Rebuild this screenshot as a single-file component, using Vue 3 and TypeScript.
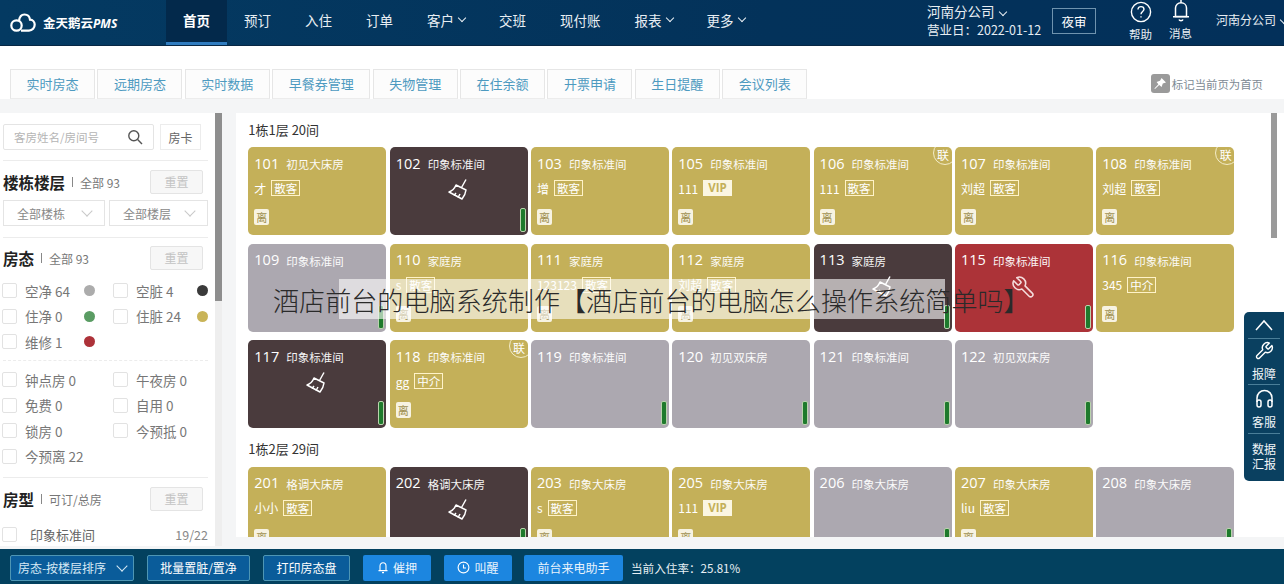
<script setup lang="ts">
type Room = {
  no: string
  name: string
  state: 'gold' | 'dark' | 'gray' | 'red'
  guest?: string
  tag?: string
  link?: boolean
}

const navs = [
  { label: '首页', active: true },
  { label: '预订' },
  { label: '入住' },
  { label: '订单' },
  { label: '客户', arrow: true },
  { label: '交班' },
  { label: '现付账' },
  { label: '报表', arrow: true },
  { label: '更多', arrow: true },
]
const tabs = ['实时房态', '远期房态', '实时数据', '早餐券管理', '失物管理', '在住余额', '开票申请', '生日提醒', '会议列表']

const stateRows = [
  [{ t: '空净 64', c: 'd-gray' }, { t: '空脏 4', c: 'd-dark' }],
  [{ t: '住净 0', c: 'd-green' }, { t: '住脏 24', c: 'd-gold' }],
  [{ t: '维修 1', c: 'd-red' }],
]
const extraRows = [
  ['钟点房 0', '午夜房 0'],
  ['免费 0', '自用 0'],
  ['锁房 0', '今预抵 0'],
  ['今预离 22'],
]

const std = '印象标准间'
const bed = '印象大床房'
const floors: { title: string; rooms: Room[] }[] = [
  {
    title: '1栋1层 20间',
    rooms: [
      { no: '101', name: '初见大床房', state: 'gold', guest: '才', tag: '散客' },
      { no: '102', name: std, state: 'dark' },
      { no: '103', name: std, state: 'gold', guest: '增', tag: '散客' },
      { no: '105', name: std, state: 'gold', guest: '111', tag: 'VIP' },
      { no: '106', name: std, state: 'gold', guest: '111', tag: '散客', link: true },
      { no: '107', name: std, state: 'gold', guest: '刘超', tag: '散客' },
      { no: '108', name: std, state: 'gold', guest: '刘超', tag: '散客', link: true },
      { no: '109', name: std, state: 'gray' },
      { no: '110', name: '家庭房', state: 'gold', guest: 's', tag: '散客' },
      { no: '111', name: '家庭房', state: 'gold', guest: '123123', tag: '散客' },
      { no: '112', name: '家庭房', state: 'gold', guest: '刘超', tag: '散客' },
      { no: '113', name: '家庭房', state: 'dark' },
      { no: '115', name: std, state: 'red' },
      { no: '116', name: std, state: 'gold', guest: '345', tag: '中介' },
      { no: '117', name: std, state: 'dark' },
      { no: '118', name: std, state: 'gold', guest: 'gg', tag: '中介', link: true },
      { no: '119', name: std, state: 'gray' },
      { no: '120', name: '初见双床房', state: 'gray' },
      { no: '121', name: std, state: 'gray' },
      { no: '122', name: '初见双床房', state: 'gray' },
    ],
  },
  {
    title: '1栋2层 29间',
    rooms: [
      { no: '201', name: '格调大床房', state: 'gold', guest: '小小', tag: '散客' },
      { no: '202', name: '格调大床房', state: 'dark' },
      { no: '203', name: bed, state: 'gold', guest: 's', tag: '散客' },
      { no: '205', name: bed, state: 'gold', guest: '111', tag: 'VIP' },
      { no: '206', name: bed, state: 'gray' },
      { no: '207', name: bed, state: 'gold', guest: 'liu', tag: '散客' },
      { no: '208', name: bed, state: 'gray' },
    ],
  },
]
</script>

<template>
  <div class="page">
    <header class="top">
      <div class="logo">
        <svg width="26" height="20" viewBox="0 0 26 20" fill="none" stroke="#fff" stroke-width="2.2">
          <circle cx="6.5" cy="12.5" r="5.2" />
          <path d="M9 8 C9.5 3.5 12 1.5 14.5 1.5 C17.5 1.5 19.6 3.6 20 6.6 C22.8 6.8 24.7 9 24.7 11.6 C24.7 14.8 22.4 17.6 19 17.6 H11" />
        </svg>
        <span class="logo-text">金天鹅云<i>PMS</i></span>
      </div>
      <nav class="nav">
        <a v-for="n in navs" :key="n.label" class="nav-item" :class="{ active: n.active }">
          {{ n.label }}<span v-if="n.arrow" class="chev"></span>
        </a>
      </nav>
      <div class="top-right">
        <div class="shop">
          <div class="shop-name">河南分公司<span class="chev"></span></div>
          <div class="shop-date">营业日：2022-01-12</div>
        </div>
        <button class="audit">夜审</button>
        <div class="top-icon help">
          <svg width="22" height="22" viewBox="0 0 22 22" fill="none" stroke="#fff" stroke-width="1.4">
            <circle cx="11" cy="11" r="9.6" />
            <path d="M8 8.6 C8 6.6 9.4 5.6 11 5.6 C12.8 5.6 14 6.8 14 8.3 C14 10.4 11 10.6 11 13.2" />
            <path d="M11 15.2 V16.6" />
          </svg>
          <span>帮助</span>
        </div>
        <div class="top-icon bell">
          <svg width="20" height="23" viewBox="0 0 20 23" fill="none" stroke="#fff" stroke-width="1.5">
            <path d="M4.5 16.5 V8 C4.5 4.8 7 2.8 10 2.8 C13 2.8 15.5 4.8 15.5 8 V16.5 Z" />
            <path d="M2 16.8 H18 M10 0 V2.8 M8 19.5 C8.6 21 11.4 21 12 19.5" />
          </svg>
          <span>消息</span>
        </div>
        <div class="user">河南分公司<span class="chev"></span></div>
      </div>
    </header>

    <div class="tabbar">
      <a v-for="t in tabs" :key="t" class="tab">{{ t }}</a>
      <div class="mark">
        <span class="mark-icon">
          <svg width="14" height="14" viewBox="0 0 14 14"><path fill="#fff" d="M8.6 1 L13 5.4 L9.8 6.6 L8.6 10 L6.2 8 L2 12 L1.4 11.4 L5.4 7.2 L3.6 5 L7 3.8 Z" /></svg>
        </span>
        标记当前页为首页
      </div>
    </div>

    <div class="body">
      <aside class="side">
        <div class="side-in">
          <div class="search-row">
            <div class="search">
              <span>客房姓名/房间号</span>
              <svg width="16" height="16" viewBox="0 0 16 16" fill="none" stroke="#555" stroke-width="1.4">
                <circle cx="6.8" cy="6.8" r="5" /><path d="M10.6 10.6 L15 15" />
              </svg>
            </div>
            <div class="card-btn">房卡</div>
          </div>

          <div class="sec floors-sec">
            <div class="sec-head">
              <b>楼栋楼层</b><i></i><span>全部 93</span><em class="reset">重置</em>
            </div>
            <div class="selects">
              <div class="select first">全部楼栋<span class="chev"></span></div>
              <div class="select">全部楼层<span class="chev"></span></div>
            </div>
          </div>

          <div class="sec state-sec">
            <div class="sec-head">
              <b>房态</b><i></i><span>全部 93</span><em class="reset">重置</em>
            </div>
            <div v-for="(r, i) in stateRows" :key="i" class="check-row">
              <div v-for="c in r" :key="c.t" class="check">
                <u></u><label>{{ c.t }}</label><s class="dot" :class="c.c"></s>
              </div>
            </div>
          </div>

          <div class="sec extra-sec">
            <div v-for="(r, i) in extraRows" :key="i" class="check-row">
              <div v-for="c in r" :key="c" class="check">
                <u></u><label>{{ c }}</label>
              </div>
            </div>
          </div>

          <div class="sec type-sec">
            <div class="sec-head">
              <b>房型</b><i></i><span>可订/总房</span><em class="reset">重置</em>
            </div>
            <div class="type-row"><u></u><label>印象标准间</label><span>19/22</span></div>
          </div>
        </div>
        <div class="side-bar"><div class="side-thumb"></div></div>
      </aside>

      <main class="main">
        <section v-for="f in floors" :key="f.title" class="floor">
          <h3>{{ f.title }}</h3>
          <div class="grid">
            <div v-for="r in f.rooms" :key="r.no" class="room" :class="r.state">
              <div class="room-head"><b>{{ r.no }}</b><span>{{ r.name }}</span></div>
              <div v-if="r.guest" class="guest">
                <span>{{ r.guest }}</span><em :class="{ vip: r.tag === 'VIP' }">{{ r.tag }}</em>
              </div>
              <div v-else class="mid">
                <svg v-if="r.state === 'dark'" width="24" height="24" viewBox="0 0 24 24" fill="none" stroke="#fff" stroke-width="1.5" stroke-linejoin="round">
                  <path d="M14.5 9.5 L19 1.5" />
                  <path d="M9 7 L19 12 C18.6 15.5 17 18.5 15 21 L2 14 C5 13 7.6 10.5 9 7 Z" />
                  <path d="M7 17.5 L9 15 M11 19.5 L13 16" />
                </svg>
                <svg v-else-if="r.state === 'red'" class="flip" width="25" height="25" viewBox="0 0 24 24" fill="none" stroke="#f4dcdc" stroke-width="1.5" stroke-linejoin="round">
                  <path d="M14.7 6.3a1 1 0 0 0 0 1.4l1.6 1.6a1 1 0 0 0 1.4 0l3.77-3.77a6 6 0 0 1-7.94 7.94l-6.91 6.91a2.12 2.12 0 0 1-3-3l6.91-6.91a6 6 0 0 1 7.94-7.94l-3.76 3.76z" />
                </svg>
              </div>
              <span v-if="r.guest" class="leave">离</span>
              <span v-if="r.state !== 'gold'" class="power"></span>
              <span v-if="r.link" class="link">联</span>
            </div>
          </div>
        </section>
      </main>

      <div class="main-bar"><div class="main-thumb"></div></div>
    </div>

    <footer class="foot">
      <button class="fbtn outline sort">房态-按楼层排序<span class="chev"></span></button>
      <button class="fbtn outline batch">批量置脏/置净</button>
      <button class="fbtn outline print">打印房态盘</button>
      <button class="fbtn solid short">
        <svg width="12" height="13" viewBox="0 0 12 13" fill="none" stroke="#fff" stroke-width="1.1"><path d="M3 9.5 V5 C3 3 4.4 1.8 6 1.8 C7.6 1.8 9 3 9 5 V9.5 Z M1.5 9.6 H10.5 M5 11.6 H7" /></svg>
        催押
      </button>
      <button class="fbtn solid short">
        <svg width="13" height="13" viewBox="0 0 13 13" fill="none" stroke="#fff" stroke-width="1.1"><circle cx="6.5" cy="6.5" r="5.4" /><path d="M6.5 3.4 V7 H9" /></svg>
        叫醒
      </button>
      <button class="fbtn solid phone">前台来电助手</button>
      <span class="rate">当前入住率：25.81%</span>
    </footer>

    <aside class="float">
      <div class="float-item up">
        <svg width="20" height="12" viewBox="0 0 20 12" fill="none" stroke="#fff" stroke-width="1.5"><path d="M2 11 L10 2 L18 11" /></svg>
      </div>
      <div class="float-item repair">
        <svg width="20" height="20" viewBox="0 0 24 24" fill="none" stroke="#fff" stroke-width="1.7" stroke-linejoin="round">
          <path d="M14.7 6.3a1 1 0 0 0 0 1.4l1.6 1.6a1 1 0 0 0 1.4 0l3.77-3.77a6 6 0 0 1-7.94 7.94l-6.91 6.91a2.12 2.12 0 0 1-3-3l6.91-6.91a6 6 0 0 1 7.94-7.94l-3.76 3.76z" />
        </svg>
        <span>报障</span>
      </div>
      <div class="float-item service">
        <svg width="19" height="20" viewBox="0 0 19 20" fill="none" stroke="#fff" stroke-width="1.5">
          <path d="M2 13 V9 C2 4.6 5.4 1.5 9.5 1.5 C13.6 1.5 17 4.6 17 9 V13" />
          <rect x="2" y="11" width="4" height="7" rx="2" /><rect x="13" y="11" width="4" height="7" rx="2" />
        </svg>
        <span>客服</span>
      </div>
      <div class="float-item report"><span>数据</span><span>汇报</span></div>
    </aside>

    <div class="caption">
      <div class="caption-band"></div>
      <p>酒店前台的电脑系统制作【酒店前台的电脑怎么操作系统简单吗】</p>
    </div>
  </div>
</template>

<style scoped>
.page {
  position: relative;
  width: 1284px;
  height: 584px;
  overflow: hidden;
  display: flex;
  flex-direction: column;
  background: #f4f5f6;
  color: #555;
  font-family: "Noto Sans CJK SC", "Noto Sans", sans-serif;
  font-size: 12px;
}
.chev {
  display: inline-block;
  width: 5px;
  height: 5px;
  margin-left: 5px;
  border-right: 1px solid currentColor;
  border-bottom: 1px solid currentColor;
  transform: translateY(-2px) rotate(45deg);
}

/* header */
.top {
  flex: none;
  height: 46px;
  display: flex;
  align-items: stretch;
  background: linear-gradient(90deg, #043a62, #03325a 60%, #03305a);
  color: #e8eef3;
  border-bottom: 1px solid #082744;
  box-sizing: border-box;
}
.logo {
  width: 166px;
  flex: none;
  display: flex;
  align-items: center;
  padding-left: 10px;
  box-sizing: border-box;
  gap: 7px;
}
.logo-text {
  font-size: 12.5px;
  font-weight: 700;
  color: #fff;
  white-space: nowrap;
}
.logo-text i {
  font-family: "Open Sans", sans-serif;
  font-size: 12px;
}
.nav {
  display: flex;
}
.nav-item {
  display: flex;
  align-items: center;
  padding: 0 17px 2px;
  font-size: 13.5px;
  white-space: nowrap;
  border-bottom: 3px solid transparent;
}
.nav-item.active {
  background: #03294b;
  border-bottom-color: #2f7cc0;
  color: #fff;
  font-weight: 700;
}
.top-right {
  display: flex;
  margin-left: auto;
  align-items: flex-start;
}
.shop {
  width: 125px;
  padding-top: 2px;
}
.shop-name {
  font-size: 13.5px;
  line-height: 18px;
}
.shop-date {
  margin-top: 1px;
  font-size: 12.5px;
  line-height: 18px;
  white-space: nowrap;
}
.audit {
  width: 44px;
  height: 26px;
  margin-top: 8px;
  padding: 0;
  background: transparent;
  border: 1px solid #6f93ae;
  color: #fff;
  font: inherit;
  font-size: 12.5px;
}
.top-icon {
  display: flex;
  flex-direction: column;
  align-items: center;
  font-size: 11.5px;
  line-height: 14px;
}
.top-icon span {
  margin-top: 3px;
}
.top-icon.help {
  margin-left: 33px;
  padding-top: 1px;
}
.top-icon.help span {
  margin-top: 4px;
}
.top-icon.bell {
  margin-left: 17px;
}
.user {
  margin-left: 24px;
  padding-top: 12px;
  width: 68px;
  font-size: 12px;
  line-height: 16px;
  white-space: nowrap;
}

/* tab strip */
.tabbar {
  flex: none;
  height: 53px;
  background: #fff;
  display: flex;
  align-items: flex-end;
  padding-left: 10px;
  gap: 2.4px;
  box-sizing: border-box;
}
.tab {
  height: 30px;
  padding: 0 15.5px;
  line-height: 28px;
  box-sizing: border-box;
  border: 1px solid #e6e6e6;
  border-bottom-color: #ececec;
  background: #fcfcfc;
  color: #4d9ac0;
  font-size: 13px;
  white-space: nowrap;
}
.mark {
  position: absolute;
  right: 21px;
  top: 74px;
  display: flex;
  align-items: center;
  gap: 2px;
  font-size: 11.4px;
  color: #7d8a94;
}
.mark-icon {
  width: 19px;
  height: 19px;
  border-radius: 3px;
  background: #9a9a9a;
  display: flex;
  align-items: center;
  justify-content: center;
}

/* body */
.body {
  flex: 1;
  min-height: 0;
  display: flex;
  padding-top: 14px;
}
.side {
  width: 222px;
  flex: none;
  height: 433px;
  display: flex;
  background: #fff;
  overflow: hidden;
}
.side-in {
  width: 215px;
  flex: none;
  padding: 11px 7px 0 3px;
  box-sizing: border-box;
}
.side-bar {
  width: 7px;
  background: #eeeeee;
}
.side-thumb {
  height: 188px;
  background: #8e8e8e;
}
.search-row {
  display: flex;
  gap: 6px;
}
.search {
  width: 151px;
  height: 26px;
  box-sizing: border-box;
  border: 1px solid #e4e4e4;
  border-radius: 2px;
  display: flex;
  align-items: center;
  justify-content: space-between;
  padding: 0 10px;
  color: #b5b5b5;
  font-size: 11.5px;
}
.card-btn {
  width: 41px;
  height: 26px;
  line-height: 25px;
  text-align: center;
  box-sizing: border-box;
  border: 1px solid #ececec;
  color: #666;
}
.sec {
  border-top: 1px solid #ececec;
}
.floors-sec {
  margin-top: 10px;
  padding-top: 9px;
  height: 77px;
  box-sizing: border-box;
}
.sec-head {
  display: flex;
  align-items: center;
  height: 24px;
  position: relative;
}
.sec-head b {
  font-size: 15.5px;
  color: #222;
  line-height: 24px;
}
.sec-head i {
  width: 1px;
  height: 10px;
  margin: 0 7px;
  background: #888;
}
.sec-head span {
  color: #777;
  font-size: 12px;
}
.reset {
  margin-left: auto;
  margin-right: 5px;
  width: 53px;
  height: 24px;
  line-height: 22px;
  box-sizing: border-box;
  text-align: center;
  font-style: normal;
  color: #c4c4c4;
  background: #f7f7f7;
  border: 1px solid #e4e4e4;
  border-radius: 2px;
}
.selects {
  display: flex;
  gap: 4px;
  margin-top: 6px;
}
.select {
  flex: 1;
  height: 26px;
  box-sizing: border-box;
  border: 1px solid #e4e4e4;
  display: flex;
  align-items: center;
  justify-content: space-between;
  padding: 0 13px;
  color: #888;
  font-size: 12px;
}
.select.first {
  flex: none;
  width: 102px;
}
.select .chev {
  width: 7px;
  height: 7px;
  color: #c8c8c8;
}
.state-sec {
  padding-top: 8px;
  height: 123px;
  box-sizing: border-box;
}
.check-row {
  display: flex;
  height: 25.5px;
  align-items: center;
}
.state-sec .sec-head {
  margin-bottom: 8px;
}
.check {
  width: 111px;
  display: flex;
  align-items: center;
  position: relative;
  flex: none;
}
u {
  display: block;
  width: 15px;
  height: 15px;
  flex: none;
  box-sizing: border-box;
  margin-left: -1px;
  border: 1px solid #e2e2e2;
  border-radius: 2px;
  text-decoration: none;
}
.check label {
  margin-left: 8px;
  font-size: 13.5px;
  color: #777;
  white-space: nowrap;
}
.dot {
  position: absolute;
  left: 81px;
  width: 11px;
  height: 11px;
  border-radius: 50%;
  text-decoration: none;
}
.check + .check .dot {
  left: 83px;
}
.d-gray { background: #acacac; }
.d-dark { background: #3a3a3a; }
.d-green { background: #5a9c63; }
.d-gold { background: #c9b458; }
.d-red { background: #ad3239; }
.extra-sec {
  padding-top: 6px;
  height: 117px;
  box-sizing: border-box;
  border-top-style: dashed;
}
.type-sec {
  padding-top: 9px;
}
.type-row {
  display: flex;
  align-items: center;
  margin-top: 11px;
  height: 24px;
}
.type-row label {
  margin-left: 13px;
  font-size: 13px;
  color: #666;
}
.type-row span {
  margin-left: auto;
  color: #888;
  font-size: 12.5px;
}

/* room grid */
.main {
  width: 1034px;
  height: 424px;
  margin-left: 14px;
  padding: 7px 0 0 12.3px;
  box-sizing: border-box;
  flex: none;
  background: #fff;
  overflow: hidden;
}
.floor + .floor {
  margin-top: 10.5px;
}
.floor h3 {
  margin: 0 0 7px;
  height: 20px;
  line-height: 20px;
  font-size: 13px;
  font-weight: 400;
  color: #333;
}
.floor + .floor h3 {
  margin-bottom: 8px;
}
.grid {
  display: grid;
  grid-template-columns: repeat(7, 138px);
  column-gap: 3.33px;
  row-gap: 8.7px;
}
.room {
  position: relative;
  height: 88px;
  border-radius: 5px;
  overflow: hidden;
  padding: 6px 6px 0;
  box-sizing: border-box;
  color: #fff;
}
.gold { background: #c4b059; }
.dark { background: #4a3b3d; }
.gray { background: #aca8b0; }
.red { background: #ac3338; }
.room-head {
  display: flex;
  align-items: center;
  height: 20px;
}
.room-head b {
  font-family: "Open Sans", sans-serif;
  font-weight: 400;
  font-size: 14.5px;
  margin-right: 9px;
  width: 23px;
}
.room-head span {
  margin-top: 2px;
  font-size: 11.5px;
  white-space: nowrap;
  opacity: 0.95;
}
.guest {
  display: flex;
  align-items: center;
  gap: 5px;
  height: 16px;
  margin-top: 7px;
  font-size: 12px;
  white-space: nowrap;
}
.guest em {
  font-style: normal;
  font-size: 11.5px;
  line-height: 14px;
  padding: 0 2px;
  border: 1px solid #fff3c8;
}
.guest em.vip {
  background: #fbf6e2;
  color: #c4b059;
  font-family: "Open Sans", sans-serif;
  font-weight: 700;
  padding: 0 4px;
  border-color: #fbf6e2;
}
.mid {
  display: flex;
  justify-content: center;
  height: 24px;
  margin-top: 5px;
}
.flip {
  transform: scaleX(-1);
}
.leave {
  position: absolute;
  left: 6px;
  top: 62px;
  width: 15px;
  height: 16px;
  line-height: 16px;
  text-align: center;
  font-size: 11px;
  border-radius: 2px;
  background: #f7f3e2;
  color: #a09050;
}
.power {
  position: absolute;
  right: 2px;
  bottom: 3px;
  width: 6px;
  height: 24px;
  box-sizing: border-box;
  border: 1px solid #b9d3ad;
  border-radius: 2px;
  background: #1e7a2c;
}
.link {
  position: absolute;
  right: -5px;
  top: -6px;
  width: 24px;
  height: 24px;
  box-sizing: border-box;
  line-height: 26px;
  text-indent: -3px;
  text-align: center;
  border: 1px solid #f3ecc8;
  border-radius: 50%;
  font-size: 12px;
}
.main-bar {
  flex: none;
  width: 14px;
  height: 424px;
  background: #fff;
}
.main-thumb {
  width: 6px;
  height: 125px;
  margin-left: 1px;
  background: #9a9a9a;
}

/* footer */
.foot {
  flex: none;
  height: 35px;
  background: #03415f;
  display: flex;
  align-items: center;
  padding: 2px 0 0 10px;
  box-sizing: border-box;
  gap: 13px;
}
.fbtn {
  height: 26px;
  padding: 0;
  border-radius: 2px;
  font: inherit;
  font-size: 12px;
  color: #fff;
  display: flex;
  align-items: center;
  justify-content: center;
  gap: 4px;
  white-space: nowrap;
}
.outline {
  background: #0a5c9a;
  border: 1px solid #4e96b4;
  box-sizing: border-box;
}
.solid {
  background: #1c86e0;
  border: 0;
  color: #e8f3fc;
}
.sort { width: 124px; color: #d7e9f5; }
.sort .chev { width: 7px; height: 7px; margin-left: 8px; }
.batch { width: 103px; }
.print { width: 87px; }
.short { width: 68px; }
.phone { width: 99px; margin-left: -1px; }
.rate {
  margin-left: -5px;
  color: #e8f0f4;
  font-size: 11.6px;
  white-space: nowrap;
}

/* floating shortcuts */
.float {
  position: absolute;
  right: 0;
  top: 312px;
  width: 40px;
  height: 169px;
  background: #0a4060;
  border-radius: 5px 0 0 5px;
  color: #f0f5f8;
  font-size: 12px;
  line-height: 15px;
  display: flex;
  flex-direction: column;
  align-items: center;
}
.float-item {
  width: 32px;
  display: flex;
  flex-direction: column;
  align-items: center;
  border-bottom: 1px solid #4a7e98;
  box-sizing: border-box;
}
.float-item.up { height: 27px; padding-top: 7px; }
.float-item.repair { height: 46px; padding-top: 2px; gap: 5px; }
.float-item.service { height: 49px; padding-top: 4px; gap: 5px; }
.float-item.report { border: 0; padding-top: 7px; }

/* caption over the screenshot */
.caption {
  position: absolute;
  left: 0;
  top: 279px;
  width: 1284px;
  height: 40px;
  pointer-events: none;
}
.caption-band {
  position: absolute;
  left: 339px;
  top: 0;
  width: 606px;
  height: 40px;
  background: rgba(255, 255, 255, 0.6);
}
.caption p {
  position: absolute;
  left: 273px;
  top: 0;
  margin: 0;
  line-height: 42px;
  font-size: 26.1px;
  font-weight: 300;
  color: #2a2a2a;
  white-space: nowrap;
}
</style>

<style>
html,
body {
  margin: 0;
  overflow: hidden;
}
</style>
